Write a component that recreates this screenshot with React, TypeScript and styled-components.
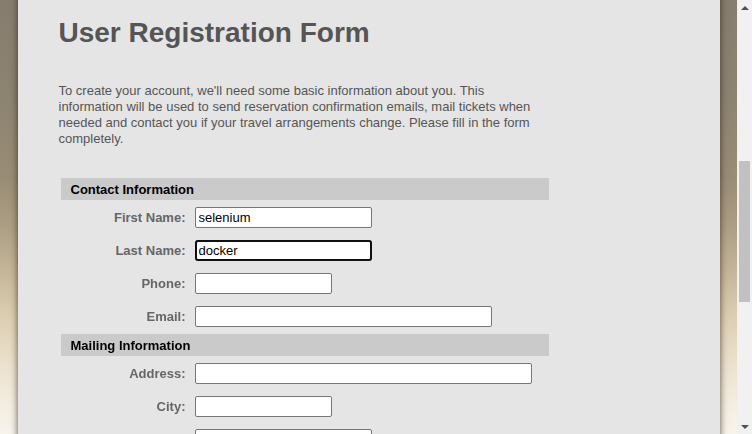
import React, { useLayoutEffect, useRef } from "react";
import styled, { createGlobalStyle } from "styled-components";

const SCROLL_TOP = 448;
const DOC_HEIGHT = 1244;
const VIEW_HEIGHT = 434;
const ARROW_SIZE = 15;
const TRACK_LENGTH = VIEW_HEIGHT - ARROW_SIZE * 2;

const GlobalStyle = createGlobalStyle`
  html, body {
    margin: 0;
    padding: 0;
  }
  body {
    font-family: "Liberation Sans", Arial, sans-serif;
    background: linear-gradient(
      to bottom,
      #877d6f 0px,
      #8d8371 100px,
      #9a8d76 180px,
      #ac9e83 225px,
      #c4b598 270px,
      #d9cbae 310px,
      #e8dcc6 350px,
      #f1e9da 390px,
      #f8f4ec 434px
    ) fixed;
  }
`;

const Page = styled.div`
  padding-right: 15px;
`;

const Panel = styled.main`
  width: 702px;
  margin: 0 auto;
  box-sizing: border-box;
  background: #e5e5e5;
  box-shadow: 0 0 7px rgba(40, 30, 20, 0.75);
  padding: ${SCROLL_TOP + 17}px 41px 117px 41px;
`;

const Title = styled.h1`
  margin: 0;
  font-size: 28px;
  line-height: 32px;
  font-weight: bold;
  color: #555;
`;

const Intro = styled.p`
  margin: 34px 0 0 0;
  width: 490px;
  font-size: 13px;
  line-height: 16px;
  color: #555;
`;

const Form = styled.form`
  margin-top: 29px;
  width: 492px;
  box-sizing: border-box;
  padding: 2px;
  display: flex;
  flex-direction: column;
  gap: 2px;
`;

const SectionHeader = styled.div`
  height: 22px;
  box-sizing: border-box;
  padding: 2px 0 0 10px;
  line-height: 20px;
  background: #cacaca;
  color: #000;
  font-size: 13px;
  font-weight: bold;
`;

const Row = styled.div`
  height: 31px;
  display: grid;
  grid-template-columns: 125px 1fr;
  column-gap: 9px;
  align-items: center;
`;

const Label = styled.label`
  text-align: right;
  font-size: 13px;
  font-weight: bold;
  color: #666;
`;

const TextInput = styled.input<{ $w: number }>`
  width: ${(p) => p.$w}px;
  height: 21px;
  box-sizing: border-box;
  border: 1px solid #767676;
  border-radius: 2px;
  padding: 1px 3px;
  background: #fff;
  color: #000;
  font-family: "Liberation Sans", Arial, sans-serif;
  font-size: 13px;
  &:focus {
    outline: 2px solid #101010;
    outline-offset: -2px;
    border-radius: 3px;
  }
`;

const CountrySelect = styled.select`
  width: 177px;
  height: 21px;
  font-family: "Liberation Sans", Arial, sans-serif;
  font-size: 13px;
`;

const SubmitButton = styled.button`
  justify-self: start;
  font-family: "Liberation Sans", Arial, sans-serif;
  font-size: 13px;
`;

/* Window scrollbar, drawn over the right edge of the viewport */
const ScrollRail = styled.div`
  position: fixed;
  top: 0;
  right: 0;
  bottom: 0;
  width: 15px;
  background: #f1f1f1;
  display: flex;
  flex-direction: column;
  z-index: 10;
`;

const ArrowButton = styled.div`
  height: ${ARROW_SIZE}px;
  flex: none;
  display: flex;
  align-items: center;
  justify-content: center;
`;

const Triangle = styled.span<{ $dir: "up" | "down" }>`
  display: block;
  width: 0;
  height: 0;
  border-left: 4px solid transparent;
  border-right: 4px solid transparent;
  border-bottom: ${(p) => (p.$dir === "up" ? "4px solid #505050" : "0")};
  border-top: ${(p) => (p.$dir === "down" ? "4px solid #505050" : "0")};
`;

const Track = styled.div`
  flex: 1;
  padding: 0 2px;
`;

const Thumb = styled.div`
  background: #c1c1c1;
`;

type Field = { label: string; width: number; value?: string };

const contact: Field[] = [
  { label: "First Name:", width: 177, value: "selenium" },
  { label: "Last Name:", width: 177, value: "docker" },
  { label: "Phone:", width: 137 },
  { label: "Email:", width: 297 },
];

const mailing: Field[] = [
  { label: "Address:", width: 337 },
  { label: "City:", width: 137 },
  { label: "State/Province:", width: 177 },
  { label: "Postal Code:", width: 137 },
];

const user: Field[] = [
  { label: "User Name:", width: 177 },
  { label: "Password:", width: 177 },
  { label: "Confirm Password:", width: 177 },
];

export default function App() {
  const lastNameRef = useRef<HTMLInputElement>(null);

  useLayoutEffect(() => {
    const el = lastNameRef.current;
    if (el) {
      el.focus({ preventScroll: true });
      el.setSelectionRange(el.value.length, el.value.length);
    }
    window.scrollTo(0, SCROLL_TOP);
  }, []);

  const thumbTop = Math.round((SCROLL_TOP / DOC_HEIGHT) * TRACK_LENGTH) + 1;
  const thumbHeight = Math.round((VIEW_HEIGHT / DOC_HEIGHT) * TRACK_LENGTH);

  const renderField = (f: Field) => (
    <Row key={f.label}>
      <Label>{f.label}</Label>
      <TextInput
        $w={f.width}
        type={f.label.includes("Password") ? "password" : "text"}
        defaultValue={f.value}
        ref={f.label === "Last Name:" ? lastNameRef : undefined}
      />
    </Row>
  );

  return (
    <>
      <GlobalStyle />
      <Page>
        <Panel>
          <Title>User Registration Form</Title>
          <Intro>
            To create your account, we'll need some basic information about you. This
            information will be used to send reservation confirmation emails, mail tickets
            when needed and contact you if your travel arrangements change. Please fill in
            the form completely.
          </Intro>
          <Form onSubmit={(e) => e.preventDefault()}>
            <SectionHeader>Contact Information</SectionHeader>
            {contact.map(renderField)}
            <SectionHeader>Mailing Information</SectionHeader>
            {mailing.map(renderField)}
            <Row>
              <Label>Country:</Label>
              <CountrySelect defaultValue="UNITED STATES">
                <option>UNITED STATES</option>
                <option>CANADA</option>
              </CountrySelect>
            </Row>
            <SectionHeader>User Information</SectionHeader>
            {user.map(renderField)}
            <Row>
              <span />
              <SubmitButton type="submit">Submit</SubmitButton>
            </Row>
          </Form>
        </Panel>
      </Page>
      <ScrollRail aria-hidden="true">
        <ArrowButton>
          <Triangle $dir="up" />
        </ArrowButton>
        <Track>
          <Thumb style={{ marginTop: thumbTop, height: thumbHeight }} />
        </Track>
        <ArrowButton>
          <Triangle $dir="down" />
        </ArrowButton>
      </ScrollRail>
    </>
  );
}
